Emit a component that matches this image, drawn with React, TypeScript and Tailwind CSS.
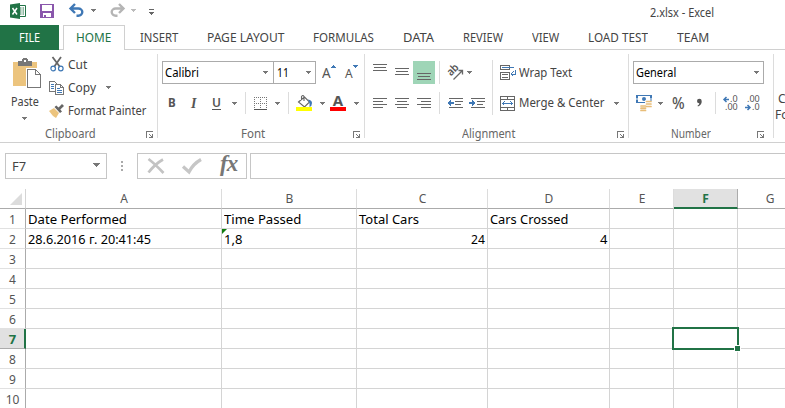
import React, { useLayoutEffect, useRef, useState } from 'react';

/** Text squeezed or stretched horizontally to a given width. */
function Fit({ w, children, className = '' }: { w: number; children: React.ReactNode; className?: string }) {
  const ref = useRef<HTMLSpanElement>(null);
  const [scale, setScale] = useState(1);
  useLayoutEffect(() => {
    if (ref.current) setScale(w / ref.current.offsetWidth);
  }, [w]);
  return (
    <span className={`inline-block shrink-0 whitespace-nowrap ${className}`} style={{ width: w }}>
      <span ref={ref} className="inline-block origin-left" style={{ transform: `scaleX(${scale})` }}>
        {children}
      </span>
    </span>
  );
}

function Icon({ w, h, className = '', soft = false, children }: { w: number; h: number; className?: string; soft?: boolean; children: React.ReactNode }) {
  return (
    <svg width={w} height={h} viewBox={`0 0 ${w} ${h}`} fill="none" shapeRendering={soft ? 'auto' : 'crispEdges'} className={`block shrink-0 overflow-visible ${className}`}>
      {children}
    </svg>
  );
}

const Caret = ({ className = '', color = '#777' }: { className?: string; color?: string }) => (
  <Icon w={5} h={3} className={className}>
    <path d="M0 0h5v1H4v1H3v1H2V2H1V1H0z" fill={color} />
  </Icon>
);

const Launcher = ({ className = '' }: { className?: string }) => (
  <Icon w={8} h={8} className={className}>
    <path d="M.5 7V.5H7" stroke="#777" />
    <path d="M3 3h1v1h1v1h1V3h1v4H3V6h2V5H4V4H3z" fill="#777" />
  </Icon>
);

const Divider = ({ className = '' }: { className?: string }) => <div className={`w-px shrink-0 bg-[#dcdcdc] ${className}`} />;

const Lines = ({ rows, className = '' }: { rows: [number, number, number][]; className?: string }) => (
  <Icon w={14} h={23} className={className}>
    {rows.map(([x, y, w]) => (
      <rect key={y} x={x} y={y} width={w} height="1" fill="#666" />
    ))}
  </Icon>
);

function GroupLabel({ w, left, gap, children }: { w: number; left: number; gap: number; children: string }) {
  return (
    <div className="flex h-4 items-center text-[12px] text-[#666]" style={{ paddingLeft: left }}>
      <Fit w={w}>{children}</Fit>
      <div style={{ width: gap }} />
      <Launcher className="mt-px" />
    </div>
  );
}

function TitleBar() {
  return (
    <div className="flex h-[25px] items-start">
      <Icon w={16} h={16} className="ml-[10px] mt-[3px]" soft>
        <path d="M8 2.5h7.500v11H8" fill="#fff" stroke="#217346" />
        <path d="M10 5h1.500M12.500 5H14M10 7h1.500M12.500 7H14M10 9h1.500M12.500 9H14M10 11h1.500M12.500 11H14" stroke="#217346" />
        <path d="M0 1.600L10 0v16L0 14.400z" fill="#217346" />
        <path d="M2.500 5l4.500 6.500M7 5l-4.500 6.500" stroke="#fff" strokeWidth="1.500" />
      </Icon>
      <Icon w={14} h={14} className="ml-[14px] mt-1">
        <path d="M0 0h14v14H0z" fill="#8a57ac" />
        <path d="M2 1h10v6H2zM3 9h8v4H6v-2H4v2H3z" fill="#fff" />
      </Icon>
      <Icon w={15} h={14} className="ml-[15px] mt-[3px]" soft>
        <path d="M1 5.500h8.300a4 3.600 0 010 7.200H7.500M6 1L1.500 5.500 6 10" stroke="#3f78b5" strokeWidth="2.400" />
      </Icon>
      <Caret className="ml-[7px] mt-[9px]" />
      <Icon w={15} h={14} className="ml-[14px] mt-[3px]" soft>
        <path d="M14 5.500H5.700a4 3.600 0 000 7.200h1.800M9 1l4.500 4.500L9 10" stroke="#b5b5b5" strokeWidth="2.400" />
      </Icon>
      <Caret className="ml-[6px] mt-[9px]" color="#bbb" />
      <Icon w={5} h={6} className="ml-[13px] mt-[9px]">
        <path d="M0 0h5v1H0zM0 3h5v1H4v1H3v1H2V5H1V4H0z" fill="#666" />
      </Icon>
      <Fit w={64} className="ml-[496px] mt-[4px] text-[12px] leading-[18px] text-[#444]">2.xlsx - Excel</Fit>
    </div>
  );
}

const tabs: [string, number][] = [
  ['INSERT', 38], ['PAGE LAYOUT', 77], ['FORMULAS', 61], ['DATA', 31],
  ['REVIEW', 40], ['VIEW', 27], ['LOAD TEST', 60], ['TEAM', 32],
];

function Tabs() {
  return (
    <div className="flex h-[25px] text-[12.5px] leading-[25px] text-[#444]">
      <div className="w-[59px] bg-[#217346] pl-[19px] text-white"><Fit w={21}>FILE</Fit></div>
      <div className="w-1 border-b border-[#d0d0d0]" />
      <div className="w-[62px] border border-b-0 border-[#d0d0d0] pl-[12px] leading-[23px] text-[#217346]"><Fit w={35}>HOME</Fit></div>
      <div className="flex flex-1 gap-[29px] border-b border-[#d0d0d0] pl-[15px]">
        {tabs.map(([t, w]) => <Fit key={t} w={w}>{t}</Fit>)}
      </div>
    </div>
  );
}

function Clipboard() {
  return (
    <div className="flex h-full w-[157px] shrink-0 flex-col">
      <div className="flex h-[76px]">
        <div className="w-[50px] pt-2">
          <Icon w={28} h={30} className="ml-[13px]">
            <path d="M0 4h24v24H0z" fill="#ecc47e" />
            <path d="M5 3h4V1h1V0h4v1h1v2h4v5H5z" fill="#777" />
            <path d="M11 2h2v2h-2z" fill="#fff" />
            <path d="M13 10h10l6 6v14H13z" fill="#fff" />
            <path d="M14.500 11.500h8l5 5v13h-13zM22.500 11.500v5h5" fill="#fff" stroke="#777" />
          </Icon>
          <Fit w={28} className="ml-[11px] mt-px text-[12px] leading-[18px] text-[#444]">Paste</Fit>
          <Caret className="ml-[22px] mt-[5px]" />
        </div>
        <div className="pt-[3px] text-[12px] text-[#444]">
          <div className="flex h-[23px] items-center">
            <Icon w={14} h={15} soft>
              <path d="M2.500 0l7.500 10M11 0L4 10" stroke="#666" strokeWidth="1.800" />
              <circle cx="3.200" cy="11.500" r="2.300" stroke="#3f78b5" strokeWidth="1.200" />
              <circle cx="10.800" cy="11.500" r="2.300" stroke="#3f78b5" strokeWidth="1.200" />
            </Icon>
            <Fit w={19} className="ml-1">Cut</Fit>
          </div>
          <div className="flex h-[23px] items-center">
            <Icon w={15} h={14} className="-ml-px">
              <path d="M.5.500h5l2 2v8h-7z" fill="#fff" stroke="#777" />
              <path d="M2 3.500h3M2 5.500h3M2 7.500h3" stroke="#3f78b5" />
              <path d="M6.500 3.500h5l3 3v7h-8zM11.500 3.500v3h3" fill="#fff" stroke="#777" />
              <path d="M8 7.500h3M8 9.500h5M8 11.500h5" stroke="#3f78b5" />
            </Icon>
            <Fit w={28} className="ml-1">Copy</Fit>
            <Caret className="ml-[10px]" />
          </div>
          <div className="flex h-[23px] items-center">
            <Icon w={15} h={14} className="-ml-px" soft>
              <path d="M0 7l5-3 5 5-3 5-3-2z" fill="#ecc47e" />
              <path d="M5.500 3l1.800-1.500 2.200 2L13 0l2 2-3.700 3.500L13 7.500 11 9z" fill="#666" />
            </Icon>
            <Fit w={78} className="ml-1">Format Painter</Fit>
          </div>
        </div>
      </div>
      <GroupLabel left={45} w={51} gap={50}>Clipboard</GroupLabel>
    </div>
  );
}

function FontGroup() {
  return (
    <div className="flex h-full w-[206px] shrink-0 flex-col pt-[11px]">
      <div className="flex h-[23px] text-[12px] text-black">
        <div className="ml-1 flex w-[112px] items-center border border-[#ababab] pl-0.5">
          <Fit w={34}>Calibri</Fit>
          <Caret className="ml-[64px]" />
        </div>
        <div className="-ml-px flex w-[43px] items-center border border-[#ababab] pl-[3px]">
          <Fit w={12}>11</Fit>
          <Caret className="ml-[17px]" />
        </div>
        <Fit w={9} className="ml-[6px] text-[15px] leading-[23px] text-[#555]">A</Fit>
        <Caret className="mt-[4px] rotate-180" color="#3f78b5" />
        <Fit w={8} className="ml-[9px] text-[12px] leading-[25px] text-[#555]">A</Fit>
        <Caret className="mt-[4px]" color="#3f78b5" />
      </div>
      <div className="mt-[8px] flex h-[22px] items-center text-[#555]">
        <Fit w={8} className="ml-[10px] text-[13px] font-bold">B</Fit>
        <span className="ml-[15px] w-2 shrink-0 font-['Liberation_Serif',serif] text-[14px] font-bold italic">I</span>
        <Fit w={9} className="ml-[13px] h-[13px] border-b border-[#555] text-[12px] leading-[12px] font-semibold">U</Fit>
        <Caret className="ml-[11px]" />
        <Divider className="ml-2 h-[22px]" />
        <Icon w={13} h={13} className="ml-[8px]">
          <path d="M.5 0v12M6.500 0v12M12.500 0v12M0 .5h13M0 6.500h13" stroke="#777" strokeDasharray="1 1" />
          <path d="M0 12.500h13" stroke="#555" />
        </Icon>
        <Caret className="ml-[8px]" />
        <Divider className="ml-[8px] h-[22px]" />
        <Icon w={16} h={16} className="ml-[7px]" soft>
          <path d="M2.500 7l6-5 5 5-5 5zM5.500 5V1.500Q7-.5 8 1.500V6" fill="#fff" stroke="#666" strokeWidth="1.100" />
          <path d="M12 4.500q4 .5 4 3.500t-2.500 4q.5-3-.5-5z" fill="#3f78b5" />
          <path d="M0 12h16v4H0z" fill="#ff0" />
        </Icon>
        <Caret className="ml-[8px]" />
        <div className="ml-[5px] flex h-4 w-4 shrink-0 items-center justify-center border-b-4 border-[#f00] text-[15px] leading-[12px] font-bold">
          <span className="-mt-0.5">A</span>
        </div>
        <Caret className="ml-2" />
      </div>
      <div className="h-[12px]" />
      <GroupLabel left={83} w={24} gap={88}>Font</GroupLabel>
    </div>
  );
}

function Alignment() {
  return (
    <div className="flex h-full w-[264px] shrink-0 flex-col pt-[10px]">
      <div className="flex h-[56px]">
        <div className="w-[127px]">
          <div className="mt-px flex h-[23px] items-center">
            <Lines className="ml-2" rows={[[0, 3, 14], [1, 6, 12], [0, 9, 14]]} />
            <Lines className="ml-2" rows={[[0, 7, 14], [1, 10, 12], [0, 13, 14]]} />
            <div className="ml-1 bg-[#9fd5b7] px-1"><Lines rows={[[0, 12, 14], [1, 15, 12], [0, 18, 14]]} /></div>
            <Divider className="ml-1 h-[23px]" />
            <Icon w={17} h={16} className="ml-[7px]" soft>
              <text x="4" y="11.500" transform="rotate(-45 4 11.500)" fontSize="11" fontWeight="600" fill="#555" textLength="12" lengthAdjust="spacingAndGlyphs">ab</text>
              <path d="M6.500 14.500l8.500-8.500M11.500 5.500H15.500v4" stroke="#666" strokeWidth="1.300" />
            </Icon>
            <Caret className="ml-[3px]" />
          </div>
          <div className="mt-[8px] flex h-[22px] items-center">
            <Lines className="ml-2" rows={[[0, 6, 14], [0, 9, 10], [0, 12, 14], [0, 15, 10]]} />
            <Lines className="ml-2" rows={[[0, 6, 14], [2, 9, 10], [0, 12, 14], [2, 15, 10]]} />
            <Lines className="ml-2" rows={[[0, 6, 14], [4, 9, 10], [0, 12, 14], [4, 15, 10]]} />
            <Divider className="ml-2 h-[22px]" />
            <Icon w={16} h={11} className="ml-[7px]">
              <path d="M2 .5h14M8 3.500h8M8 6.500h6M2 9.500h14" stroke="#666" />
              <path d="M0 5l4-3v2h3v2H4v2z" fill="#3f78b5" />
            </Icon>
            <Icon w={16} h={11} className="ml-[6px]">
              <path d="M2 .5h14M8 3.500h8M8 6.500h6M2 9.500h14" stroke="#666" />
              <path d="M7 5L3 2v2H0v2h3v2z" fill="#3f78b5" />
            </Icon>
          </div>
        </div>
        <Divider className="h-[55px]" />
        <div className="text-[12px] text-[#444]">
          <div className="mt-px flex h-[23px] items-center">
            <Icon w={16} h={15} className="ml-[7px]">
              <path d="M.5.500h9v4h-9zM.5 7.500h9v7h-9z" fill="#fff" stroke="#666" />
              <path d="M2 9.500h6M2 12.500h6" stroke="#666" />
              <path d="M2 2.500h12" stroke="#3f78b5" />
              <path d="M15.500 5v4H11M13.500 6.500L11 9l2.500 2.500" stroke="#3f78b5" />
            </Icon>
            <Fit w={53} className="ml-[3px]">Wrap Text</Fit>
          </div>
          <div className="mt-[8px] flex h-[22px] items-center">
            <Icon w={15} h={15} className="ml-[7px]">
              <path d="M.5.500h14v14H.5zM0 3.500h15M0 11.500h15M7.500 0v3M7.500 12v3" stroke="#666" />
              <path d="M2 7.500h11M4.500 5.500l-2 2 2 2M10.500 5.500l2 2-2 2" stroke="#3f78b5" />
            </Icon>
            <Fit w={86} className="ml-1">Merge &amp; Center</Fit>
            <Caret className="ml-[9px]" />
          </div>
        </div>
      </div>
      <div className="h-[10px]" />
      <GroupLabel left={97} w={53} gap={102}>Alignment</GroupLabel>
    </div>
  );
}

function NumberGroup() {
  return (
    <div className="flex h-full w-[144px] shrink-0 flex-col pt-[11px]">
      <div className="ml-[4px] flex h-[23px] w-[131px] items-center border border-[#ababab] pl-[2px] text-[12px] text-black">
        <Fit w={40}>General</Fit>
        <Caret className="ml-[78px]" />
      </div>
      <div className="mt-[8px] flex h-[22px] items-center text-[#555]">
        <Icon w={16} h={16} className="ml-[7px]" soft>
          <path d="M0 0h16v8H0z" fill="#3f78b5" />
          <path d="M2 1h12v6H2z" fill="#fff" />
          <circle cx="8" cy="4" r="2" fill="#3f78b5" />
          <path d="M1 3v2M15 3v2" stroke="#fff" />
          <path d="M9 5.500h7v8H9zM3 10h8v6H3z" fill="#fff" />
          <path d="M10.500 6.500h4.500M10.500 9h4.500M10.500 11.500h4.500M5 11h4.500M5 13.200h4.500M5 15.400h4.500" stroke="#e8bd78" strokeWidth="1.700" strokeLinecap="round" />
        </Icon>
        <Caret className="ml-[6px]" />
        <Fit w={13} className="ml-[9px] text-[16px] font-medium">%</Fit>
        <Icon w={5} h={8} className="ml-3" soft>
          <path d="M0 2a2.300 2.300 0 014.700 0q.3 3.500-3.700 5.500l-.5-.8Q2.500 5.500 2.300 4.200 0 4.300 0 2z" fill="#555" />
        </Icon>
        <Divider className="ml-[13px] h-[22px]" />
        <div className="ml-[7px] w-4 shrink-0 text-[9px] leading-[8px]">
          <div className="flex h-2 items-center">
            <Icon w={6} h={5} soft><path d="M1 2.500h5M3.500 0L1 2.500 3.500 5" stroke="#3f78b5" strokeWidth="1.500" /></Icon>
            <Fit w={8} className="ml-px">.0</Fit>
          </div>
          <div className="flex h-2 items-center pl-0.5"><Fit w={13}>.00</Fit></div>
        </div>
        <div className="ml-[6px] w-4 shrink-0 text-[9px] leading-[8px]">
          <div className="flex h-2 items-center pl-0.5"><Fit w={13}>.00</Fit></div>
          <div className="flex h-2 items-center">
            <Icon w={6} h={5} soft><path d="M0 2.500h5M2.500 0L5 2.500 2.500 5" stroke="#3f78b5" strokeWidth="1.500" /></Icon>
            <Fit w={8} className="ml-px">.0</Fit>
          </div>
        </div>
      </div>
      <div className="h-[12px]" />
      <GroupLabel left={42} w={40} gap={46}>Number</GroupLabel>
    </div>
  );
}

function Ribbon() {
  return (
    <div className="flex h-[93px] overflow-hidden border-b border-[#d0d0d0]">
      <Clipboard />
      <Divider className="mt-1 h-[84px]" />
      <FontGroup />
      <Divider className="mt-1 h-[84px]" />
      <Alignment />
      <Divider className="-ml-px mt-1 h-[84px]" />
      <NumberGroup />
      <Divider className="mt-1 h-[84px]" />
      <div className="shrink-0 pt-[41px] text-[12px] leading-4 text-[#444]">
        <div className="pl-[4px]">C</div>
        <div className="pl-px">Fo</div>
      </div>
    </div>
  );
}

function FormulaBar() {
  return (
    <div className="flex h-[46px] pt-[10px]">
      <div className="ml-[5px] flex h-[26px] w-[102px] items-center border border-[#c6c6c6] pl-[6px] text-[12px] text-[#444]">
        <Fit w={14} className="mt-px">F7</Fit>
        <Icon w={7} h={4} className="ml-[67px] -mt-0.5"><path d="M0 0h7v1H6v1H5v1H4v1H3V3H2V2H1V1H0z" fill="#777" /></Icon>
      </div>
      <Icon w={2} h={10} className="ml-[14px] mt-2"><path d="M0 0h2v2H0zM0 4h2v2H0zM0 8h2v2H0z" fill="#aaa" /></Icon>
      <div className="ml-[14px] flex h-[26px] w-[110px] items-center border border-[#c6c6c6]">
        <Icon w={18} h={16} className="ml-[9px]" soft><path d="M1.500 1Q8 6 16.500 15M16 1.500Q8 6 1.500 14.500" stroke="#c3c3c3" strokeWidth="2.700" /></Icon>
        <Icon w={20} h={16} className="ml-[17px]" soft><path d="M1 8.500l6 5.500Q11 6 19 1.500" stroke="#c6c6c6" strokeWidth="3.200" /></Icon>
        <span className="-mt-1 ml-[18px] font-['Liberation_Serif',serif] text-[23px] leading-6 font-bold italic tracking-[-1px] text-[#777]">fx</span>
      </div>
      <div className="ml-[3px] h-[26px] flex-1 border border-r-0 border-[#c6c6c6]" />
    </div>
  );
}

const columns = ['A', 'B', 'C', 'D', 'E', 'F', 'G'];
const rowNumbers = [1, 2, 3, 4, 5, 6, 7, 8, 9, 10];
const cells: Record<string, { text: string; w: number; right?: boolean; flag?: boolean }> = {
  A1: { text: 'Date Performed', w: 99 },
  B1: { text: 'Time Passed', w: 77 },
  C1: { text: 'Total Cars', w: 60 },
  D1: { text: 'Cars Crossed', w: 78 },
  A2: { text: '28.6.2016 г. 20:41:45', w: 123 },
  B2: { text: '1,8', w: 18, flag: true },
  C2: { text: '24', w: 14, right: true },
  D2: { text: '4', w: 7, right: true },
};

function Sheet() {
  return (
    <div className="grid auto-rows-[20px] grid-cols-[26px_196px_135px_131px_122px_64px_64px_64px] text-[13px] leading-[21px] text-black">
      <div className="flex items-start justify-end border-r border-b border-[#d4d4d4] border-b-[#ababab] pr-[3px] pt-[4px]">
        <Icon w={12} h={12} soft><path d="M12 0v12H0z" fill="#dcdcdc" /></Icon>
      </div>
      {columns.map((c) => (
        <div
          key={c}
          className={c === 'F'
            ? 'border-r border-b-2 border-r-[#ababab] border-b-[#217346] bg-[#e1e1e1] text-center text-[12px] leading-[19px] font-bold text-[#217346]'
            : 'border-r border-b border-r-[#dcdcdc] border-b-[#ababab] pl-px text-center text-[12px] leading-[19px] text-[#555]'}
        >
          {c}
        </div>
      ))}
      {rowNumbers.map((r) => (
        <React.Fragment key={r}>
          <div className={r === 7
            ? 'border-r-2 border-b border-r-[#217346] border-b-[#ababab] bg-[#e1e1e1] pl-px text-center text-[13px] leading-[20px] font-bold text-[#217346]'
            : 'border-r border-b border-r-[#ababab] border-b-[#e1e1e1] text-center text-[12px] text-[#555]'}
          >
            {r}
          </div>
          {columns.map((c) => {
            const cell = cells[c + r];
            return (
              <div key={c} className={`relative border-r border-b border-[#d4d4d4] px-[2px] ${cell?.right ? 'text-right' : ''}`}>
                {cell && <Fit w={cell.w}>{cell.text}</Fit>}
                {cell?.flag && <Icon w={5} h={5} className="absolute top-0 left-0" soft><path d="M0 0h5L0 5z" fill="#107c10" /></Icon>}
                {c + r === 'F7' && (
                  <div className="absolute -top-[2px] -left-[2px] z-10 h-[23px] w-[67px] border-2 border-[#217346]">
                    <div className="absolute -right-[4px] -bottom-[4px] h-[7px] w-[7px] border border-white bg-[#217346]" />
                  </div>
                )}
              </div>
            );
          })}
        </React.Fragment>
      ))}
    </div>
  );
}

export default function App() {
  return (
    <div className="h-[408px] w-[785px] overflow-hidden bg-white font-['Noto_Sans','Open_Sans',sans-serif]">
      <TitleBar />
      <Tabs />
      <Ribbon />
      <FormulaBar />
      <Sheet />
    </div>
  );
}
